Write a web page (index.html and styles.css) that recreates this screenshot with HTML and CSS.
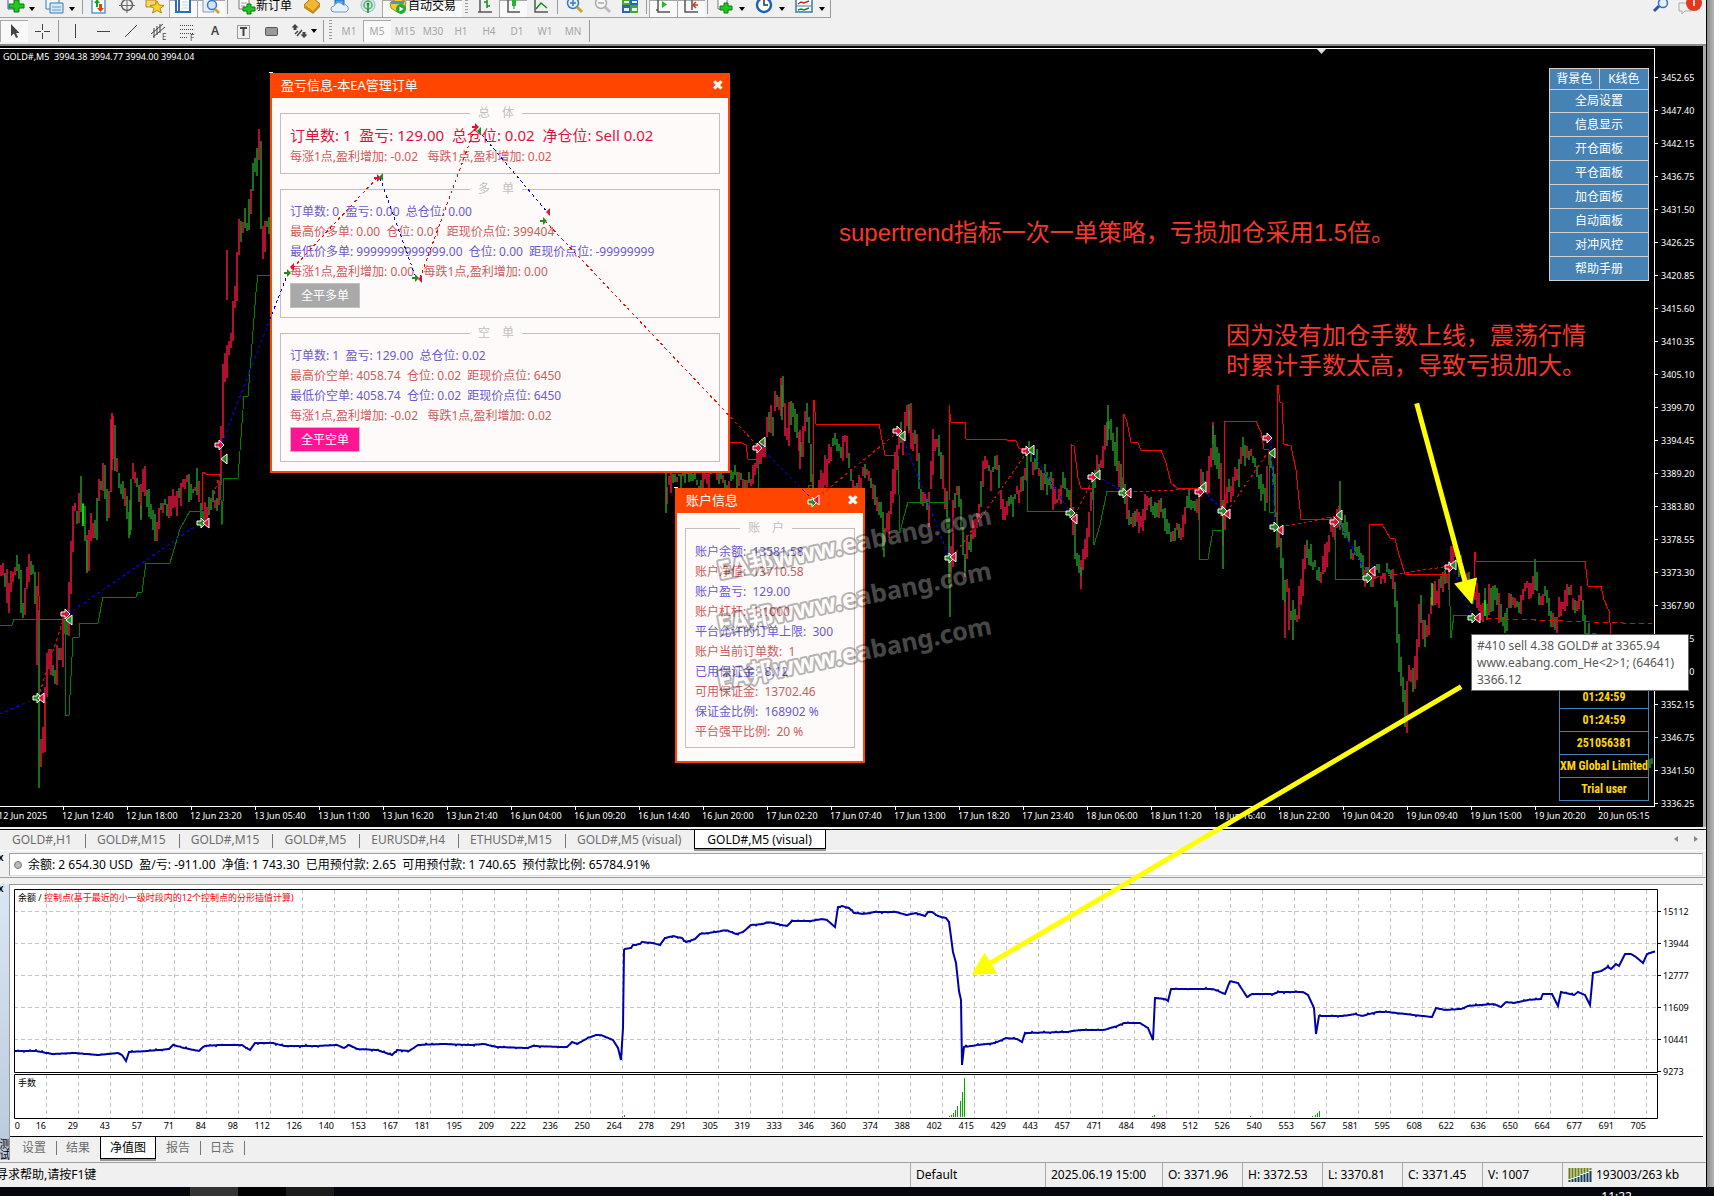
FILE: index.html
```html
<!DOCTYPE html>
<html lang="zh-CN">
<head>
<meta charset="utf-8">
<title>GOLD#,M5 (visual)</title>
<link rel="stylesheet" href="styles.css">
</head>
<body>
<div class="screen">
<main class="app">
  <header class="toolbars">
    <div class="bar bar-main">
      <div class="group">
        <button class="tool drop" aria-label="新图表"><svg viewBox="0 0 20 17"><path d="M3 0V9H11V0" fill="#fff" stroke="#2b5f91"/><path d="M9 0h5v4h5v4h-5v4H9V8H4V4h5z" fill="#1fc91f" stroke="#0b7d12"/></svg><i class="caret"></i></button>
        <button class="tool drop" aria-label="配置文件"><svg viewBox="0 0 20 17"><path d="M1 0V9H14V0" fill="#eef6fc" stroke="#3b7aaa"/><path d="M5 3H18V13H5z" fill="#d5e8f6" stroke="#3b7aaa"/><path d="M7 7H16M7 10H16" stroke="#5f9fc9"/></svg><i class="caret"></i></button>
        <span class="sep"></span>
        <button class="tool" aria-label="市场报价"><svg viewBox="0 0 20 17"><path d="M3 0V13H16V0" fill="#fff" stroke="#5a9bd0" stroke-width="1.5"/><path d="M7 7V3H5l3-4 3 4H9v4z" fill="#14a414"/><path d="M10 4h3v4h2l-3.500 4L8 8h2z" fill="#e0401a"/></svg></button>
        <button class="tool" aria-label="数据窗口"><svg viewBox="0 0 20 17"><circle cx="10" cy="5" r="5.500" fill="none" stroke="#666" stroke-width="1.500"/><path d="M10 0V13M2 5.500H18" stroke="#666"/></svg></button>
        <button class="tool" aria-label="导航"><svg viewBox="0 0 20 17"><path d="M1 0H11V7H1z" fill="#f5d56b" stroke="#b78b1a"/><path d="M12 1l2 4 5 .5-4 3 1.500 4.500-4.500-2.500L7.500 13 9 8.500 5 5.500l5-.5z" fill="#ffd427" stroke="#b88711"/></svg></button>
        <button class="tool on" aria-label="终端"><svg viewBox="0 0 20 17"><path d="M3 0V12H17V0" fill="#fff" stroke="#2f6fb4" stroke-width="2"/><path d="M6 0V11" stroke="#2f6fb4" stroke-width="2"/><path d="M9 2H15M9 5H15M9 8H15" stroke="#bcd0e4"/></svg></button>
        <button class="tool on" aria-label="策略测试"><svg viewBox="0 0 20 17"><path d="M2 0V12H13V0" fill="#e9eef5" stroke="#8899aa"/><circle cx="11" cy="5" r="4.500" fill="#cfe6fa" stroke="#3a78c0" stroke-width="1.500"/><path d="M14 9L18 13" stroke="#d2a02b" stroke-width="2.500"/></svg></button>
        <span class="sep"></span>
        <button class="tool text"><svg viewBox="0 0 20 17"><path d="M3 0V9H13V0" fill="#fff" stroke="#777"/><path d="M5 3H11M5 6H9" stroke="#999"/><path d="M11 4h4v3h4v4h-4v3h-4v-3H7V7h4z" fill="#1fc91f" stroke="#0b7d12"/></svg>新订单</button>
        <button class="tool" aria-label="编辑器"><svg viewBox="0 0 20 17"><path d="M2 5L10-3 18 4 11 12z" fill="#f1b730" stroke="#a77812"/><path d="M2 5v3l9 6 7-7V4l-7 7z" fill="#c98d1c"/></svg></button>
        <button class="tool" aria-label="云"><svg viewBox="0 0 20 17"><path d="M5 0H14V5H5z" fill="#4aa0ea" stroke="#1f69b5"/><path d="M4 12a3 3 0 0 1 0-6 5 5 0 0 1 9-1 3.500 3.500 0 0 1 3 7z" fill="#e8f1fa" stroke="#6d9bc7"/></svg></button>
        <button class="tool" aria-label="信号"><svg viewBox="0 0 20 17"><circle cx="10" cy="5" r="7" fill="#d6eadb" stroke="#8bb9d6"/><circle cx="10" cy="5" r="4" fill="none" stroke="#5ba67b" stroke-width="1.500"/><circle cx="10" cy="4" r="1.500" fill="#2e8a3d"/><path d="M10 5V13" stroke="#2eaa3d" stroke-width="2"/></svg></button>
        <button class="tool text on auto"><svg viewBox="0 0 20 17"><path d="M2 3L10-2 18 2 17 9 9 12 3 8z" fill="#f3c938" stroke="#b18a16"/><path d="M3 1h13v3H3z" fill="#4e94cc"/><circle cx="13" cy="9" r="5" fill="#1fae2d"/><path d="M11.500 6.500v5l4-2.500z" fill="#fff"/></svg>自动交易</button>
        <span class="grip"></span>
        <button class="tool" aria-label="柱状图"><svg viewBox="0 0 20 17"><path d="M5 0V12H17M3 12H5" stroke="#555" fill="none" stroke-width="1.500"/><path d="M12 0V8M9 2H12M12 6H15" stroke="#168a1c" stroke-width="1.500"/></svg></button>
        <button class="tool on" aria-label="蜡烛图"><svg viewBox="0 0 20 17"><path d="M5 0V12H17" stroke="#555" fill="none" stroke-width="1.500"/><path d="M11 0V9" stroke="#168a1c"/><path d="M9 0h4v6H9z" fill="#27b52e"/></svg></button>
        <button class="tool" aria-label="折线图"><svg viewBox="0 0 20 17"><path d="M4 0V12H17" stroke="#555" fill="none" stroke-width="1.500"/><path d="M5 9L10 3 16 8" stroke="#168a1c" fill="none" stroke-width="1.500"/></svg></button>
        <span class="sep"></span>
        <button class="tool" aria-label="放大"><svg viewBox="0 0 20 17"><circle cx="9" cy="3" r="5.500" fill="#e2f0fc" stroke="#3a78c0" stroke-width="1.500"/><path d="M6 3H12M9 0V6" stroke="#3a78c0" stroke-width="1.500"/><path d="M13 7L18 12" stroke="#d2a02b" stroke-width="3"/></svg></button>
        <button class="tool" aria-label="缩小"><svg viewBox="0 0 20 17"><circle cx="9" cy="3" r="5.500" fill="#f5f5f5" stroke="#aaa" stroke-width="1.500"/><path d="M6 3H12" stroke="#aaa" stroke-width="1.500"/><path d="M13 7L18 12" stroke="#bbb" stroke-width="3"/></svg></button>
        <button class="tool" aria-label="平铺窗口"><svg viewBox="0 0 20 17"><path d="M2 0h8v5H2zM10 5h8v8h-8z" fill="#49a72b"/><path d="M10 0h8v5h-8zM2 5h8v8H2z" fill="#2b62bd"/><path d="M4 1h5v2H4zM12 1h5v2h-5zM4 8h5v3H4zM12 8h5v3h-5z" fill="#e8f2ff"/></svg></button>
        <span class="sep"></span>
        <button class="tool on" aria-label="自动滚动"><svg viewBox="0 0 20 17"><path d="M5 0V12H17M3 10H5" stroke="#555" fill="none" stroke-width="1.500"/><path d="M9 1v7l5-3.500z" fill="#27b52e"/></svg></button>
        <button class="tool on" aria-label="图表平移"><svg viewBox="0 0 20 17"><path d="M4 0V12H17M11 0V10" stroke="#555" fill="none" stroke-width="1.500"/><path d="M17 5H13M15 2l-3 3 3 3" stroke="#c8401a" fill="none" stroke-width="1.500"/></svg></button>
        <span class="sep"></span>
        <button class="tool drop" aria-label="指标"><svg viewBox="0 0 20 17"><path d="M3 0V9H12V0" fill="#fff" stroke="#777"/><path d="M9 3h4v3h4v4h-4v3H9v-3H5V6h4z" fill="#1fc91f" stroke="#0b7d12"/></svg><i class="caret"></i></button>
        <button class="tool drop" aria-label="周期"><svg viewBox="0 0 20 17"><circle cx="9" cy="5" r="7" fill="#fff" stroke="#1f62b8" stroke-width="2.500"/><path d="M9 0V5H13" stroke="#333" fill="none" stroke-width="1.500"/></svg><i class="caret"></i></button>
        <button class="tool drop" aria-label="模板"><svg viewBox="0 0 20 17"><path d="M1 0V12H17V0" fill="#fff" stroke="#3b7aaa" stroke-width="1.500"/><path d="M1 6H17" stroke="#3b7aaa"/><path d="M3 4l3-2 3 1 5-2" stroke="#b3321a" fill="none" stroke-width="1.500"/><path d="M3 10l3-1 3 1 5-2" stroke="#168a1c" fill="none" stroke-width="1.500"/></svg><i class="caret"></i></button>
      </div>
      <div class="right-tools">
        <button class="tool" aria-label="搜索"><svg viewBox="0 0 20 17"><circle cx="13" cy="3" r="4.500" fill="#e8f0fb" stroke="#3a6fd0" stroke-width="1.500"/><path d="M9 6L4 11" stroke="#2a56b0" stroke-width="3"/></svg></button>
        <button class="tool wide" aria-label="消息"><svg viewBox="0 0 28 17"><path d="M3 3h12v8H9l-3 3v-3H3z" fill="#eee" stroke="#aaa"/><circle cx="18" cy="3" r="8" fill="#e03a1e"/><path d="M18 0V6" stroke="#fff" stroke-width="1.500"/></svg></button>
      </div>
    </div>
    <div class="bar bar-draw">
      <button class="tool on" aria-label="光标"><svg viewBox="0 0 20 20"><path d="M7 3V15L10 12.500 12 17 14 16 12 12H15.500z" fill="#444"/></svg></button>
      <button class="tool" aria-label="十字"><svg viewBox="0 0 20 20"><path d="M10.500 3V9M10.500 12V18M3 10.500H9M12 10.500H18" stroke="#444"/></svg></button>
      <span class="sep"></span>
      <button class="tool" aria-label="垂直线"><svg viewBox="0 0 20 20"><path d="M10.500 3V17" stroke="#444"/></svg></button>
      <button class="tool" aria-label="水平线"><svg viewBox="0 0 20 20"><path d="M4 10.500H17" stroke="#444"/></svg></button>
      <button class="tool" aria-label="趋势线"><svg viewBox="0 0 20 20"><path d="M4 16L16 4" stroke="#444"/></svg></button>
      <button class="tool" aria-label="通道"><svg viewBox="0 0 20 20"><path d="M2 13L14 3M4 16L16 6M5 7L5 17M8 5L8 14M11 3L11 12" stroke="#444"/><text x="13" y="19" font-size="8" fill="#444">E</text></svg></button>
      <button class="tool" aria-label="斐波"><svg viewBox="0 0 20 20"><path d="M3 4.500H17M3 8.500H17M3 12.500H17M3 16.500H11" stroke="#444" stroke-dasharray="1 1"/><text x="13" y="20" font-size="8" fill="#444">F</text></svg></button>
      <button class="tool glyph">A</button>
      <button class="tool" aria-label="文字标签"><svg viewBox="0 0 20 20"><path d="M4.500 4.500H16.500V17.500H4.500z" fill="none" stroke="#444" stroke-dasharray="1 1"/><path d="M7 7H14M10.500 7V15" stroke="#444" stroke-width="2"/></svg></button>
      <button class="tool" aria-label="矩形"><svg viewBox="0 0 20 20"><rect x="4.500" y="6.500" width="12" height="8" rx="1" fill="#999" stroke="#555"/></svg></button>
      <button class="tool drop" aria-label="箭头"><svg viewBox="0 0 20 20"><path d="M6 3l3.500 3.500H7.500V9h-3V6.500H2.500zM15 17l-3.500-3.500h2V11h3v2.500h2z" fill="#444"/><path d="M6 13l3-3M8 15l5-6" stroke="#444" stroke-width="1.500"/></svg><i class="caret"></i></button>
      <span class="sep"></span><span class="grip"></span>
      <nav class="frames">
        <button>M1</button><button class="on">M5</button><button>M15</button><button>M30</button><button>H1</button><button>H4</button><button>D1</button><button>W1</button><button>MN</button>
      </nav>
    </div>
  </header>

  <section class="chart">
    <div class="plot">
      <svg id="price" viewBox="0 49 1654 757" preserveAspectRatio="none"></svg>
      <p class="symbol">GOLD#,M5&nbsp; 3994.38 3994.77 3994.00 3994.04</p>

      <nav class="menu">
        <div class="menu-top"><button>背景色</button><button>K线色</button></div>
        <button>全局设置</button><button>信息显示</button><button>开仓面板</button><button>平仓面板</button><button>加仓面板</button><button>自动面板</button><button>对冲风控</button><button>帮助手册</button>
      </nav>

      <ul class="info"><li></li><li></li><li>01:24:59</li><li>01:24:59</li><li>251056381</li><li>XM Global Limited</li><li>Trial user</li></ul>

      <article class="win win-orders">
        <header><h2>盈亏信息-本EA管理订单</h2><button aria-label="关闭">✖</button></header>
        <fieldset class="total"><legend>总&emsp;体</legend>
          <p class="big">订单数: 1  盈亏: 129.00  总仓位: 0.02  净仓位: Sell 0.02</p>
          <p class="r">每涨1点,盈利增加: -0.02   每跌1点,盈利增加: 0.02</p>
        </fieldset>
        <fieldset><legend>多&emsp;单</legend>
          <p>订单数: 0  盈亏: 0.00  总仓位: 0.00</p>
          <p class="r">最高价多单: 0.00  仓位: 0.01  距现价点位: 399404</p>
          <p>最低价多单: 9999999999999.00  仓位: 0.00  距现价点位: -99999999</p>
          <p class="r">每涨1点,盈利增加: 0.00   每跌1点,盈利增加: 0.00</p>
          <button class="close-all">全平多单</button>
        </fieldset>
        <fieldset><legend>空&emsp;单</legend>
          <p>订单数: 1  盈亏: 129.00  总仓位: 0.02</p>
          <p class="r">最高价空单: 4058.74  仓位: 0.02  距现价点位: 6450</p>
          <p>最低价空单: 4058.74  仓位: 0.02  距现价点位: 6450</p>
          <p class="r">每涨1点,盈利增加: -0.02   每跌1点,盈利增加: 0.02</p>
          <button class="close-all hot">全平空单</button>
        </fieldset>
      </article>

      <article class="win win-account">
        <header><h2>账户信息</h2><button aria-label="关闭">✖</button></header>
        <fieldset><legend>账&emsp;户</legend>
          <p>账户余额:  13581.58</p>
          <p class="r">账户净值:  13710.58</p>
          <p>账户盈亏:  129.00</p>
          <p class="r">账户杠杆:  1:1000</p>
          <p>平台允许的订单上限:  300</p>
          <p class="r">账户当前订单数:  1</p>
          <p>已用保证金:  8.12</p>
          <p class="r">可用保证金:  13702.46</p>
          <p>保证金比例:  168902 %</p>
          <p class="r">平台强平比例:  20 %</p>
        </fieldset>
      </article>
      <svg id="orders" class="layer" viewBox="0 49 1654 757" preserveAspectRatio="none"></svg>
    </div>
    <ol class="prices"><li>3452.65</li><li>3447.40</li><li>3442.15</li><li>3436.75</li><li>3431.50</li><li>3426.25</li><li>3420.85</li><li>3415.60</li><li>3410.35</li><li>3405.10</li><li>3399.70</li><li>3394.45</li><li>3389.20</li><li>3383.80</li><li>3378.55</li><li>3373.30</li><li>3367.90</li><li>3362.65</li><li>3357.40</li><li>3352.15</li><li>3346.75</li><li>3341.50</li><li>3336.25</li></ol>
    <ol class="dates"><li>12 Jun 2025</li><li>12 Jun 12:40</li><li>12 Jun 18:00</li><li>12 Jun 23:20</li><li>13 Jun 05:40</li><li>13 Jun 11:00</li><li>13 Jun 16:20</li><li>13 Jun 21:40</li><li>16 Jun 04:00</li><li>16 Jun 09:20</li><li>16 Jun 14:40</li><li>16 Jun 20:00</li><li>17 Jun 02:20</li><li>17 Jun 07:40</li><li>17 Jun 13:00</li><li>17 Jun 18:20</li><li>17 Jun 23:40</li><li>18 Jun 06:00</li><li>18 Jun 11:20</li><li>18 Jun 16:40</li><li>18 Jun 22:00</li><li>19 Jun 04:20</li><li>19 Jun 09:40</li><li>19 Jun 15:00</li><li>19 Jun 20:20</li><li>20 Jun 05:15</li></ol>
  </section>

  <nav class="tabs chart-tabs">
    <a href="#">GOLD#,H1</a><a href="#">GOLD#,M15</a><a href="#">GOLD#,M15</a><a href="#">GOLD#,M5</a><a href="#">EURUSD#,H4</a><a href="#">ETHUSD#,M15</a><a href="#">GOLD#,M5 (visual)</a><a href="#" class="active">GOLD#,M5 (visual)</a>
    <span class="scroll"><i></i><i class="next"></i></span>
  </nav>

  <section class="terminal"><span class="x">x</span><p><i class="dot"></i>余额: 2 654.30 USD  盈/亏: -911.00  净值: 1 743.30  已用预付款: 2.65  可用预付款: 1 740.65  预付款比例: 65784.91%</p></section>

  <section class="tester">
    <aside><span class="x">x</span><span class="side-name">测试</span></aside>
    <div class="report">
      <div class="graph">
        <div class="graph-plot">
          <svg id="balance" viewBox="14 889 1644 230" preserveAspectRatio="none"></svg>
          <p class="caption">余额 / <span>控制点(基于最近的小一级时段内的12个控制点的分形插值计算)</span></p>
          <p class="caption lots">手数</p>
        </div>
        <ol class="levels"><li>15112</li><li>13944</li><li>12777</li><li>11609</li><li>10441</li><li>9273</li></ol>
        <ol class="trades"><li>0</li><li>16</li><li>29</li><li>43</li><li>57</li><li>71</li><li>84</li><li>98</li><li>112</li><li>126</li><li>140</li><li>153</li><li>167</li><li>181</li><li>195</li><li>209</li><li>222</li><li>236</li><li>250</li><li>264</li><li>278</li><li>291</li><li>305</li><li>319</li><li>333</li><li>346</li><li>360</li><li>374</li><li>388</li><li>402</li><li>415</li><li>429</li><li>443</li><li>457</li><li>471</li><li>484</li><li>498</li><li>512</li><li>526</li><li>540</li><li>553</li><li>567</li><li>581</li><li>595</li><li>608</li><li>622</li><li>636</li><li>650</li><li>664</li><li>677</li><li>691</li><li>705</li></ol>
      </div>
      <nav class="tabs tester-tabs"><a href="#">设置</a><a href="#">结果</a><a href="#" class="active">净值图</a><a href="#">报告</a><a href="#">日志</a></nav>
    </div>
  </section>

  <footer class="status">
    <span class="help">寻求帮助,请按F1键</span><span>Default</span><span>2025.06.19 15:00</span><span>O: 3371.96</span><span>H: 3372.53</span><span>L: 3370.81</span><span>C: 3371.45</span><span>V: 1007</span>
    <span><svg class="traffic" viewBox="0 0 24 14"><path d="M1.500 0V11M4.500 0V10M7.500 0V9M10.500 0V8M13.500 0V6M16.500 0V5M19.500 0V4M22.500 0V2" stroke="#6b7f12" stroke-width="2"/><path d="M1.500 12V14M4.500 11V14M7.500 10V14M10.500 9V14M13.500 7V14M16.500 6V14M19.500 5V14M22.500 3V14" stroke="#12405c" stroke-width="2"/></svg>193003/263 kb</span>
  </footer>

  <div class="hint">#410 sell 4.38 GOLD# at 3365.94<br>www.eabang.com_He&lt;2&gt;1; (64641)<br>3366.12</div>
  <p class="note note-a">supertrend指标一次一单策略，亏损加仓采用1.5倍。</p>
  <p class="note note-b">因为没有加仓手数上线，震荡行情<br>时累计手数太高，导致亏损加大。</p>
  <svg class="layer" viewBox="0 0 1707 1186" preserveAspectRatio="none">
    <g fill="#ff0" stroke="#ff0">
      <path d="M1417.500 403L1467 585M1462 686L988 964" stroke-width="5"/>
      <path d="M1455 583L1478 577 1473 604zM985 952L998 973 972 974z" stroke="none"/>
    </g>
    <g class="watermark">
      <text transform="translate(720 579) rotate(-11.500)">EA邦www.eabang.com</text>
      <text transform="translate(720 634) rotate(-11.500)">EA邦www.eabang.com</text>
      <text transform="translate(720 689) rotate(-11.500)">EA邦www.eabang.com</text>
    </g>
  </svg>
</main>
<div class="edge"></div>
</div>
<footer class="taskbar"><i></i><i></i><i></i><time>11:22</time></footer>
<script src="chart.js"></script>
</body>
</html>
```
FILE: styles.css
```css
* { box-sizing: border-box; }
body { margin: 0; background: #05070c; font: 12px/16px "Noto Sans", "Noto Sans CJK SC", sans-serif; color: #000; min-height: 100vh; display: flex; flex-direction: column; overflow-x: hidden; }
p, ol, ul, h2, fieldset { margin: 0; padding: 0; }
ol, ul { list-style: none; }
button { font: inherit; color: inherit; background: none; border: 0; padding: 0; }
a { color: inherit; text-decoration: none; }

.screen { display: flex; overflow: hidden; }
.app { flex: 1; min-width: 0; position: relative; background: #f0f0f0; border-right: 1px solid #000; display: flex; flex-direction: column; }
.edge { width: 7px; background: linear-gradient(90deg, #8c8c8c, #b8b4b4); }
.layer { position: absolute; inset: 0; width: 100%; height: 100%; pointer-events: none; }

/* toolbars */
.toolbars { height: 46px; border-bottom: 2px solid #8a8a8a; }
.bar { display: flex; align-items: flex-start; }
.bar-main { height: 18px; justify-content: space-between; }
.group { display: flex; height: 18px; border-right: 1px solid #999; border-bottom: 1px solid #a0a0a0; }
.tool { flex: none; width: 28px; height: 17px; display: flex; align-items: center; justify-content: center; }
.tool svg { flex: none; width: 20px; height: 17px; }
.tool.drop { width: 40px; gap: 4px; }
.tool.wide { width: 32px; }
.tool.wide svg { width: 28px; }
.tool.text { width: 68px; font-size: 12px; line-height: 12px; align-items: flex-start; }
.tool.auto { width: 80px; }
.on { background: #f9f9f9; box-shadow: inset 1px 1px #a8a8a8; }
.caret { border: 3px solid transparent; border-top: 4px solid #000; border-bottom: 0; }
.sep { flex: none; width: 1px; height: 14px; margin: 0 2px; background: #999; }
.grip { flex: none; width: 3px; height: 20px; margin: 0 3px; background: repeating-linear-gradient(#999 0 1px, transparent 1px 3px); }
.bar-main .grip { height: 14px; }
.right-tools { display: flex; }
.bar-draw { height: 26px; padding-top: 2px; }
.bar-draw .tool { height: 22px; }
.bar-draw .tool.drop { width: 36px; gap: 2px; }
.bar-draw .tool svg { height: 20px; }
.bar-draw .sep { height: 22px; }
.glyph { color: #444; font-weight: 600; }
.frames { display: flex; border-right: 1px solid #999; padding-right: 2px; color: #a5a5a5; font-size: 10px; }
.frames button { width: 28px; height: 22px; }

/* price chart */
.chart { background: #000; color: #fff; display: grid; grid-template-columns: 1fr 48px; padding-top: 2px; border-right: 3px solid #aaa; font-size: 9px; line-height: 12px; }
.plot { position: relative; border: 1px solid #fff; border-left: 0; }
.plot > svg { display: block; width: 100%; height: 757px; }
.symbol { position: absolute; left: 3px; top: 2px; white-space: pre; }
.prices { height: 0; padding-top: 24px; }
.prices li { height: 33px; display: flex; align-items: flex-start; gap: 3px; }
.prices li::before { content: ""; width: 3px; height: 1px; margin-top: 5px; background: #fff; }
.dates { grid-column: 1 / -1; display: flex; height: 20px; margin-left: -2px; }
.dates li { flex: none; width: 64px; padding-top: 3px; white-space: nowrap; background: linear-gradient(#fff, #fff) no-repeat 1px 0 / 1px 3px; }

.menu { position: absolute; right: 5px; top: 19px; width: 100px; border: 1px solid #d0d0d0; background: #4682b4; font-size: 12px; line-height: 18px; }
.menu button { display: block; width: 100%; height: 24px; border-top: 1px solid #d0d0d0; }
.menu-top { display: flex; }
.menu .menu-top button { height: 20px; border-top: 0; }
.menu-top button + button { border-left: 1px solid #d0d0d0; }
.menu-top + button { height: 23px; }

.info { position: absolute; right: 5px; bottom: 5px; width: 90px; border: 1px solid #4682b4; color: #ffd700; font: bold 12px/22px "Liberation Sans Narrow", "Roboto Condensed", "Liberation Sans", sans-serif; text-align: center; white-space: nowrap; }
.info li { height: 23px; overflow: hidden; }
.info li + li { border-top: 1px solid #4682b4; }

.win { position: absolute; background: #fffafa; border: 2px solid #ff4500; color: #6a5acd; font-size: 12px; line-height: 20px; }
.win::before { content: ""; position: absolute; left: -3px; top: -3px; width: 4px; height: 1px; background: #fff; }
.win > header { display: flex; justify-content: space-between; align-items: center; height: 23px; padding: 0 4px 4px 9px; background: #ff4500; color: #fff; }
.win h2 { font-size: 13px; font-weight: 400; }
.win > header button { font-size: 14px; }
.win-orders { left: 270px; top: 24px; width: 460px; height: 400px; }
.win-account { left: 675px; top: 439px; width: 190px; height: 275px; }
.win fieldset { margin: 7px 8px 0; padding: 5px 17px 9px 9px; border: 1px solid #c0c0c0; min-width: 0; }
.win legend { margin: 0 auto; padding: 0 8px; line-height: 16px; color: #c0c0c0; }
.win p { white-space: pre; height: 20px; }
.win .r { color: #cd5c5c; }
.win .total { padding: 2px 17px 6px 9px; }
.win-account fieldset { padding-top: 6px; padding-bottom: 5px; }
.win .big { font-size: 15px; line-height: 24px; height: 24px; color: #dc143c; }
.close-all { display: block; width: 70px; height: 25px; margin-top: 1px; border: 1px solid #c0c0c0; background: #a9a9a9; color: #fff; line-height: 18px; }
.close-all.hot { background: #ff1493; }

.hint { position: absolute; left: 1471px; top: 634px; width: 218px; padding: 2px 5px; background: #fff; border: 1px solid #666; color: #575757; font-size: 12px; line-height: 17px; white-space: nowrap; }
.note { position: absolute; color: #f5382c; font: 24px/30px "Liberation Sans", "Noto Sans CJK SC", sans-serif; white-space: nowrap; }
.note-a { left: 839px; top: 218px; }
.note-b { left: 1226px; top: 321px; }
.watermark { font: bold 25px "Noto Sans", "Noto Sans CJK SC", sans-serif; fill: #fff; stroke: #000; stroke-width: 4px; stroke-linejoin: round; paint-order: stroke; }
.watermark text { opacity: .28; }

/* tab strips */
.tabs { display: flex; align-items: flex-start; color: #6d6d6d; border-top: 1px solid #000; }
.tabs a { position: relative; padding: 2px 13px 0 12px; height: 19px; white-space: nowrap; }
.tabs a + a::before { content: ""; position: absolute; left: 0; top: 4px; height: 14px; border-left: 1px solid #777; }
.tabs a.active { background: #fff; color: #000; border: 1px solid #000; border-top: 0; box-shadow: 0 2px #999; }
.tabs a.active::before, .tabs a.active + a::before { display: none; }
.chart-tabs { margin-top: 2px; height: 21px; }
.scroll { margin: 6px 8px 0 auto; display: flex; gap: 16px; }
.scroll i { border: 3px solid transparent; border-right: 4px solid #888; border-left: 0; }
.scroll .next { border-left: 4px solid #888; border-right: 0; }

.terminal { display: flex; height: 28px; border-top: 1px solid #fff; border-bottom: 1px solid #a0a0a0; padding: 2px 3px 2px 0; }
.terminal p { flex: 1; height: 23px; display: flex; align-items: center; gap: 6px; padding-left: 4px; background: #fff; border: 1px solid #a0a0a0; border-right-color: #ddd; border-bottom-color: #ddd; white-space: pre; }
.x { width: 9px; flex: none; font: bold 10px/10px "Liberation Sans", sans-serif; margin-left: -2px; }
.terminal .x { width: 11px; }
.dot { width: 8px; height: 8px; border-radius: 50%; background: #bbb; border: 1px solid #777; }

/* strategy tester */
.tester { display: flex; margin-top: 6px; padding-right: 3px; }
.tester aside { width: 9px; display: flex; flex-direction: column; justify-content: space-between; background: linear-gradient(#dbe6f3, #b9c9dc); overflow: hidden; }
.side-name { writing-mode: vertical-rl; font-size: 11px; line-height: 9px; }
.report { flex: 1; min-width: 0; border-left: 1px solid #999; border-top: 1px solid #999; background: #f0f0f0; }
.graph { background: #fff; display: grid; grid-template-columns: 1fr 45px; padding: 4px 0 0 4px; font-size: 9px; line-height: 12px; }
.graph-plot { position: relative; }
.graph-plot svg { display: block; width: 100%; height: 230px; }
.caption { position: absolute; left: 4px; top: 3px; white-space: nowrap; }
.caption span { color: #f00; }
.caption.lots { top: 188px; }
.levels { height: 0; padding-top: 17px; }
.levels li { height: 32px; padding-left: 5px; background: linear-gradient(#000, #000) no-repeat 0 5px / 3px 1px; }
.trades { grid-column: 1 / -1; display: flex; height: 17px; padding-top: 1px; }
.trades li { flex: none; width: 32px; text-align: right; }
.trades li:first-child { width: 6px; }
.trades li:nth-child(2) { width: 26px; }
.tester-tabs { height: 24px; padding-left: 2px; }
.tester-tabs a { padding: 3px 10px 0; height: 22px; }
.tester-tabs a.active { padding: 3px 9px 0; }
.tester-tabs::after { content: ""; height: 14px; margin-top: 4px; border-left: 1px solid #777; }

.status { display: flex; height: 25px; margin-top: 2px; border-top: 1px solid #a0a0a0; line-height: 24px; white-space: nowrap; }
.status span { padding: 0 5px; border-left: 1px solid #aaa; }
.status .help { flex: 1; border: 0; padding: 0; margin-left: -4px; }
.status span:nth-child(2) { width: 135px; }
.status span:nth-child(3) { width: 117px; }
.status span:nth-child(n+4) { width: 80px; }
.status span:last-child { width: 144px; display: flex; align-items: center; gap: 4px; }
.traffic { width: 24px; height: 14px; }

.taskbar { flex: 1; min-height: 9px; height: 9px; overflow: hidden; display: flex; padding-left: 190px; color: #fff; }
.taskbar i { width: 48px; background: #333; }
.taskbar i:nth-child(2) { background: #000; }
.taskbar i:nth-child(3) { background: #1b1b1b; }
.taskbar time { margin: 2px 82px 0 auto; }
```
FILE: chart.js
```js
const NS = 'http://www.w3.org/2000/svg';
const add = (parent, name, attrs) => {
  const el = document.createElementNS(NS, name);
  for (const key in attrs) el.setAttribute(key, attrs[key]);
  parent.appendChild(el);
  return el;
};
let seed = 7;
const random = () => (seed = (seed * 16807) % 2147483647) / 2147483647;

/* ---- price bars: x,y turning points of the series ---- */
const runs = [
  '0,581 5,572 8,598 12,567 17,565 20,577 23,617 27,581 30,565 34,577 37,610 38,666 39,714 40,770 42,751 45,723 47,671 50,652 53,666 56,676 58,643 62,657 65,614 68,633 71,572 73,515 75,501 78,515 80,492 83,515 86,534 88,563 90,539 93,525 96,530 99,478 102,482 104,459 107,496 109,525 112,430 114,463 117,473 121,487 125,492 128,515 130,534 132,487 137,482 140,496 144,468 148,496 152,510 156,536 160,510 164,506 168,510 173,501 180,487 188,478 192,492 197,492 200,510 203,525 207,525 210,506 214,506 219,506 221,468 223,402 225,336 227,374 229,317 231,364 233,298 236,298 238,256 240,223 243,242 245,213 247,251 249,218 252,194 254,171 256,166 259,138 261,171 262,223 264,246 266,223 269,223',
  '666,495 672,476 700,480 715,474 728,482 735,470 752,485 757,465 760,440 763,450 767,430 770,415 773,430 775,395 777,400 780,410 782,390 785,420 787,445 790,400 795,410 798,440 801,460 804,430 807,412 810,440 812,475 816,500 820,490 824,480 828,465 833,440 837,450 841,458 845,440 849,470 854,485 858,490 863,475 868,470 873,480 878,500 882,520 884,540 888,530 893,500 897,450 900,430 903,445 906,420 909,410 912,440 915,430 918,460 921,500 925,490 928,500 932,470 934,440 937,430 940,450 943,480 946,500 948,520 950,580 952,560 954,500 957,490 960,510 963,540 965,560 968,540 971,545 974,525 978,510 981,500 983,470 988,465 993,470 997,465 1000,490 1004,510 1008,500 1013,505 1018,500 1023,480 1026,470 1028,445 1032,460 1036,470 1045,475 1050,480 1054,500 1058,500 1062,485 1066,495 1069,495 1073,520 1076,560 1081,575 1085,545 1089,520 1093,490 1097,475 1102,460 1106,430 1109,418 1112,435 1116,450 1119,480 1123,490 1128,510 1133,520 1138,510 1141,530 1145,500 1149,490 1154,500 1158,515 1163,505 1168,530 1173,540 1177,530 1181,545 1185,515 1190,500 1195,505 1198,515 1202,480 1206,490 1209,465 1213,440 1217,460 1221,490 1224,530 1227,490 1230,500 1234,480 1238,475 1243,450 1248,460 1253,460 1257,465 1262,480 1266,490 1269,450 1272,460 1275,480 1277,530 1281,550 1284,600 1287,580 1290,620 1294,625 1298,620 1302,590 1306,555 1310,560 1315,565 1320,580 1325,560 1330,535 1335,525 1338,510 1341,525 1345,530 1349,545 1353,560 1358,545 1363,560 1367,570 1372,575 1377,570 1383,575 1388,570 1393,570 1396,600 1399,650 1403,695 1406,715 1408,690 1411,670 1415,690 1418,640 1420,605 1424,620 1427,635 1431,605 1434,590 1437,615 1440,580 1444,585 1448,580 1452,555 1455,550 1459,565 1464,580 1468,575 1473,600 1477,595 1480,610 1484,605 1488,620 1491,595 1494,585 1497,600 1501,620 1505,625 1509,600 1513,600 1517,595 1520,600 1525,590 1530,585 1535,570 1539,600 1543,595 1547,590 1552,620 1556,630 1561,605 1565,600 1569,595 1573,600 1577,615 1582,600 1586,635 1591,640 1594,635',
  '1649,762 1652,766'
];
const price = document.getElementById('price');
const parse = s => s.split(' ').map(p => p.split(',').map(Number));
const at = (pts, x) => {
  for (let i = 1; i < pts.length; i++) {
    const [x0, y0] = pts[i - 1], [x1, y1] = pts[i];
    if (x <= x1) return y0 + (y1 - y0) * (x - x0) / (x1 - x0);
  }
  return pts[pts.length - 1][1];
};
let up = '', down = '';
for (const run of runs) {
  const pts = parse(run);
  const last = pts[pts.length - 1][0];
  let drift = 0;
  for (let x = pts[0][0]; x <= last; x += 2) {
    drift = drift * 0.5 + (random() - 0.5) * 14;
    const a = at(pts, x) + drift, b = at(pts, Math.min(x + 2, last)) + drift;
    const reach = () => 1 + random() * 5 + (random() > 0.8 ? random() * 14 : 0);
    const top = Math.round(Math.min(a, b) - reach());
    const low = Math.round(Math.max(a, b) + reach());
    const rising = b < a ? random() > 0.2 : random() > 0.75;
    const bar = `M${x + 1} ${top}V${low}`;
    if (rising) up += bar; else down += bar;
  }
}
/* single long wicks */
up += 'M112 413V470M227 250V300M1407 690V733M800 430V469M965 560V577M1081 560V589M1285 600V638M259 129V160';
down += 'M39 610V788M87 540V573M130 500V535M950 560V617M884 530V557M1108 405V440M1213 425V460M1340 481V530M1223 500V569M666 470V513M1293 600V640M1405 690V727M1535 559V590M782 385V420M115 425V470M909 404V430M141 505V520';
add(price, 'path', { d: up, stroke: '#dc143c', 'stroke-width': 1.6 });
add(price, 'path', { d: down, stroke: '#228b22', 'stroke-width': 1.6 });
add(price, 'path', { d: 'M83 504V526M1432 583V605M1485 600V616', stroke: '#0f0', 'stroke-width': 1.6 });

/* ---- trend lines ---- */
const green = ['0,625 12,625 14,619 38,619', '65,619 66,715 69,715 73,638 79,637 80,623 98,623 103,597 136,597 138,592 142,592 146,563 170,563 180,529 190,511 200,511', '220,474 222,525 224,478 238,478 244,396 248,396 256,292 258,275 270,275', '758,459 758,490', '808,490 808,485 813,485', '898,455 900,533 903,520 908,502 948,502', '1027,448 1028,511 1069,511', '1093,488 1094,545 1100,525 1107,491 1121,491', '1199,488 1200,559 1208,559 1213,530 1223,530', '1269,450 1269,512 1276,513', '1335,519 1336,579 1368,579', '1449,574 1451,638 1454,615 1472,615'];
const red = ['38,572 40,619 65,619', '202,510 203,472 206,474 220,474', '730,442 740,442 746,445 748,459 758,459', '813,485 814,400 816,424 879,424 882,440 885,455 898,455', '949,500 949,405 951,422 965,422 966,439 1007,440 1016,441 1019,448 1026,448', '1071,515 1072,445 1074,446 1078,478 1081,488 1092,488', '1123,490 1124,414 1127,422 1131,442 1138,443 1141,450 1161,450 1166,463 1171,483 1177,488 1200,488', '1224,520 1224,421 1256,421 1261,432 1264,449 1269,450', '1277,520 1278,385 1280,402 1282,403 1284,444 1291,446 1296,470 1301,519 1335,519', '1369,580 1370,524 1382,524 1390,538 1395,539 1399,555 1405,574 1449,574', '1474,600 1475,552 1476,561 1585,561 1588,586 1601,586 1604,600 1609,611 1611,634'];
const line = (parent, points, stroke, extra) => add(parent, 'polyline', { points, stroke, fill: 'none', 'shape-rendering': 'crispEdges', ...extra });
green.forEach(p => line(price, p, '#008000'));
red.forEach(p => line(price, p, '#f00'));
add(price, 'path', { d: 'M1317 49h9l-4.500 5z', fill: '#ddd' });

/* ---- order history ---- */
const orders = document.getElementById('orders');
const dash = { 'stroke-dasharray': '3 3' };
['0,714 37,698', '68,614 200,523', '222,443 288,273', '380,178 416,278', '478,130 548,213', '760,447 813,500', '902,435 949,557', '1031,451 1070,512', '1097,476 1124,492', '1203,490 1223,511', '1271,440 1275,527', '1337,520 1368,575', '1452,566 1473,618'].forEach(p => line(orders, p, '#00f', dash));
['38,698 65,614', '205,523 220,474', '293,268 377,178', '420,278 475,128', '545,221 757,445', '817,498 898,432', '953,557 1028,451', '1075,515 1094,477', '1128,492 1199,489', '1227,512 1268,452', '1280,527 1338,516', '1370,578 1450,566'].forEach(p => line(orders, p, '#f00', dash));
line(orders, '1477,618 1652,624', '#f00', { 'stroke-dasharray': '5 4' });

const G = '#228b22', R = '#dc143c';
const arrow = (x, y, fill, stroke) => add(orders, 'path', { d: `M${x - 4} ${y - 2}h4v-3l5 5-5 5v-3h-4z`, fill, stroke });
const head = (x, y, fill, stroke) => add(orders, 'path', { d: `M${x - 3} ${y}l6-5v10z`, fill, stroke });
const small = (x, y, fill, isArrow) => add(orders, 'path', { d: isArrow ? `M${x - 3} ${y - 1}h3v-3l4 4-4 4v-3h-3z` : `M${x - 2} ${y}l4-4v8z`, fill });
[[37,698,41,698,0],[65,614,69,620,1],[201,523,206,523,0],[219,445,224,459,1],[757,448,762,442,1],[812,502,816,500,0],[897,431,902,436,1],[949,558,953,557,0],[1026,451,1031,450,1],[1070,513,1074,519,0],[1092,477,1097,475,1],[1123,493,1128,493,0],[1199,492,1203,487,1],[1222,511,1227,514,0],[1267,438,1272,453,1],[1274,527,1280,530,0],[1334,522,1339,515,1],[1367,578,1372,571,0],[1449,567,1453,565,1],[1472,618,1477,618,0]]
  .forEach(([ax, ay, tx, ty, sell]) => { arrow(ax, ay, sell ? R : G, '#fff'); head(tx, ty, sell ? G : R, '#fff'); });
[[287,273,292,267,0],[377,178,381,177,1],[415,278,420,279,0],[475,127,479,131,1],[543,221,548,212,0]]
  .forEach(([ax, ay, tx, ty, sell]) => { small(ax, ay, sell ? R : G, true); small(tx, ty, sell ? G : R, false); });

/* ---- balance graph ---- */
const balance = document.getElementById('balance');
let grid = '';
for (let x = 46; x < 1657; x += 32) grid += `M${x + .5} 890V1072M${x + .5} 1075V1118`;
for (let y = 911; y < 1070; y += 32) grid += `M14 ${y + .5}H1657`;
add(balance, 'path', { d: grid, stroke: '#c4c4c4', 'stroke-dasharray': '4 3' });
add(balance, 'path', { d: 'M14.500 889.500H1657.500V1072.500H14.500zM14.500 1074.500H1657.500V1118.500H14.500z', fill: 'none', stroke: '#000' });
const equity = parse('15,1051 36,1051 52,1054 75,1053 98,1055 118,1053 122,1055 126,1061 129,1052 148,1051 169,1049 173,1045 184,1048 199,1051 204,1046 219,1045 242,1045 250,1050 255,1043 273,1043 284,1046 317,1046 337,1045 344,1048 349,1045 357,1049 377,1050 392,1055 397,1050 409,1051 418,1045 443,1044 470,1045 484,1044 497,1047 527,1048 533,1046 563,1047 567,1047 572,1042 577,1044 588,1038 596,1035 601,1035 613,1040 618,1048 621,1060 623,1028 624,949 631,948 633,945 640,944 642,942 653,943 660,945 665,938 673,936 682,938 686,942 695,939 700,934 716,932 726,930 736,934 743,932 751,925 763,924 768,922 787,926 792,921 811,921 822,919 827,920 835,927 838,907 842,906 849,908 854,913 864,914 874,912 896,912 907,915 916,913 925,916 928,912 932,912 938,916 946,918 949,922 953,952 956,963 959,991 961,1000 962,1065 964,1047 978,1045 995,1043 1006,1038 1017,1039 1022,1042 1025,1033 1066,1032 1080,1030 1104,1030 1117,1026 1124,1023 1140,1023 1148,1028 1153,1040 1155,998 1165,999 1168,1001 1171,989 1213,989 1225,994 1230,981 1238,983 1247,997 1252,994 1273,994 1279,992 1303,992 1308,995 1314,1008 1316,1034 1319,1016 1344,1016 1355,1014 1362,1016 1377,1012 1388,1012 1405,1014 1432,1017 1436,1008 1445,1010 1461,1009 1468,1006 1494,1004 1501,1007 1506,1002 1514,1003 1528,1000 1541,999 1543,994 1552,994 1558,1006 1561,992 1574,995 1578,992 1585,995 1590,1005 1593,973 1601,971 1608,967 1611,969 1616,964 1619,966 1625,954 1631,954 1636,957 1643,963 1647,954 1656,951');
let path = 'M15 1051';
for (let x = 15; x < 1656; x += 1) {
  const y = at(equity, x);
  const calm = Math.abs(at(equity, x + 5) - y) < 3;
  path += `L${x} ${(y + (calm && x % 6 === 0 ? random() * 2 - 1 : 0)).toFixed(1)}`;
}
add(balance, 'path', { d: path, fill: 'none', stroke: '#0000a8', 'stroke-width': 2 });
const lots = [[949,1],[951,2],[953,4],[955,7],[957,11],[960,16],[962,25],[964,39],[622,1],[624,2],[1152,1],[1154,2],[1250,1],[1312,1],[1315,2],[1317,4],[1319,6]];
add(balance, 'path', { d: lots.map(([x, h]) => `M${x + .5} 1117v${-h}`).join(''), stroke: '#00a800' });
```
